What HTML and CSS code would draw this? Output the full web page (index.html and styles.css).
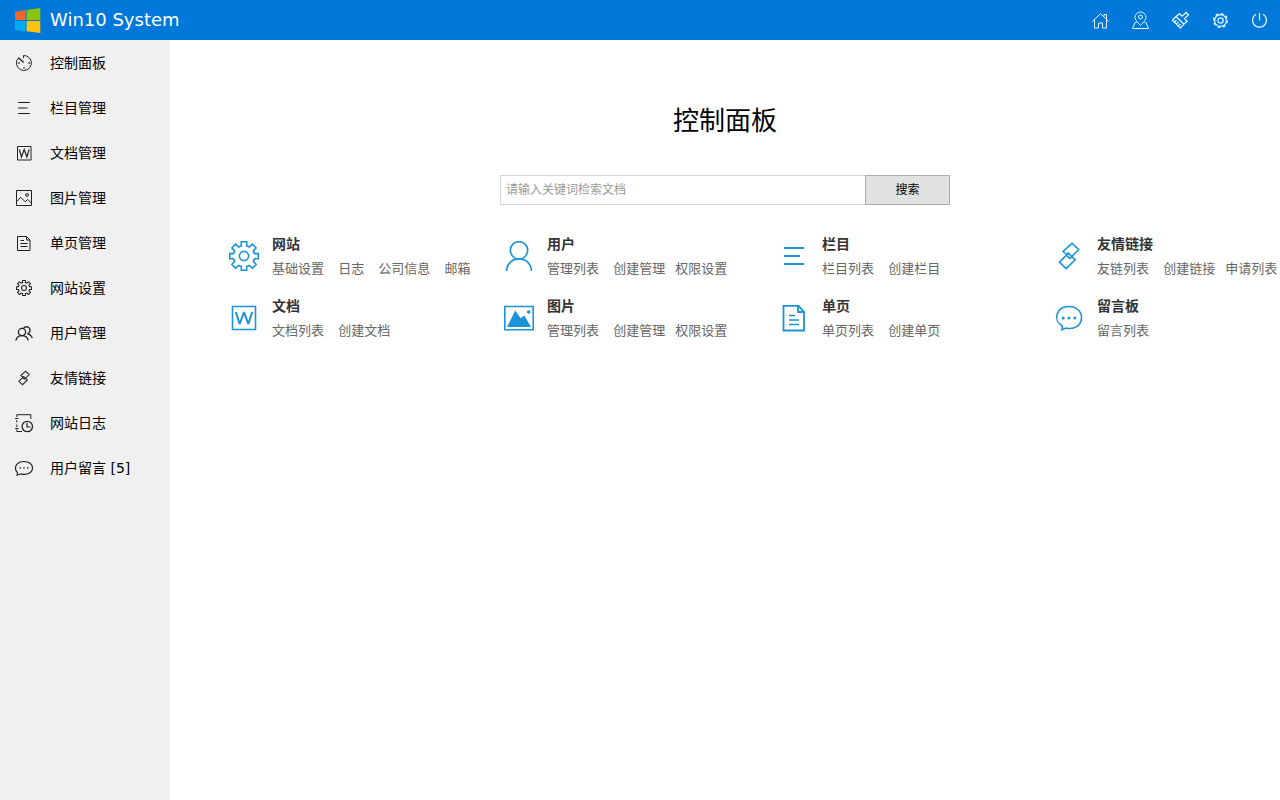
FILE: index.html
```html
<!DOCTYPE html>
<html lang="zh-CN">
<head>
<meta charset="utf-8">
<meta name="viewport" content="width=device-width, initial-scale=1">
<title>Win10 System</title>
<link rel="stylesheet" href="styles.css">
</head>
<body>
<svg class="defs" aria-hidden="true">
  <symbol id="gear" viewBox="0 0 30 30">
    <path d="M12.3 0.8h5.4v4.1l2.7 1.1 3-2.8 3.7 3.7-2.8 3 1.1 2.7h3.8v5.2h-3.8l-1.1 2.7 2.8 3-3.7 3.7-3-2.8-2.7 1.1v3.8h-5.4v-3.8l-2.7-1.1-3 2.8-3.7-3.7 2.8-3-1.1-2.7h-3.8v-5.2h3.8l1.1-2.7-2.8-3 3.7-3.7 3 2.8 2.7-1.1z"/>
    <circle cx="15" cy="15" r="4.6"/>
  </symbol>
  <symbol id="link" viewBox="0 0 30 30">
    <path d="M12.500 13.500 9 10.500 18 2.300l6.700 6.200-8.900 9-3-2.900M17.500 15l3.700 3.700-9 8.900-6.700-6.400 8.800-9.200 3.200 3.200"/>
  </symbol>
</svg>
<header class="topbar">
  <svg class="logo" viewBox="0 0 26 26" aria-hidden="true">
    <path fill="#f3652f" d="M0 3.7 10.6 2v10H0z"/>
    <path fill="#8cc404" d="M11.6 1.9 25.3 0v12H11.6z"/>
    <path fill="#00adf0" d="M0 13h10.6v10.5L0 22z"/>
    <path fill="#ffc30c" d="M11.6 13h13.7v12l-13.7-1.8z"/>
  </svg>
  <span class="brand">Win10 System</span>
  <nav class="tools">
    <button class="tool" aria-label="首页"><svg class="icon" viewBox="0 0 20 20"><path d="M2.300 11.500 10.500 3.700 18.700 11.500M4.500 9.500v8.500h4v-5h4v5h4V9.500M14 6.500V4.500h2.500V9"/></svg></button>
    <button class="tool" aria-label="地图"><svg class="icon" viewBox="0 0 20 20"><path d="M10.500 15.500C7.500 12 5 10 5 7.500a5.500 5.500 0 0 1 11 0c0 2.500-2.500 4.500-5.500 8zM6.500 12.500H5L2.500 18.500h16L16 12.500h-1.500"/><circle cx="10.500" cy="7" r="2"/></svg></button>
    <button class="tool" aria-label="主题"><svg class="icon" viewBox="0 0 20 20"><path stroke-width="1.300" d="M6 6.500 9.500 3.700l2.600 2.500 4-3.700L18.500 5l-4 3.600 2.600 2.600-3.200 2.900zM6 6.500l-3.500 3.800 7.900 7.800 3.500-4M4.500 12l2-1.800M6.500 14l2-2M8.500 16l2-2"/></svg></button>
    <button class="tool" aria-label="设置"><svg class="icon" viewBox="0 0 20 20"><circle cx="10.500" cy="10.500" r="5.900" stroke-width="1.200"/><circle cx="10.500" cy="10.500" r="2.700" stroke-width="1.200"/><circle cx="10.500" cy="10.500" r="6.900" stroke-width="1.400" stroke-dasharray="2.900 2.520"/></svg></button>
    <button class="tool" aria-label="退出"><svg class="icon" viewBox="0 0 20 20"><path stroke-width="1.300" d="M9.500 3v7.300M6 4.200a7 7 0 1 0 7 0"/></svg></button>
  </nav>
</header>
<div class="layout">
  <nav class="sidebar">
    <a class="item" href="#"><svg class="icon" viewBox="0 0 20 20"><path d="M9.500 5V2.500a7.500 7.500 0 1 1-5 2.300"/><path stroke-width="1.300" d="M4.500 4.800 9.700 9.500M5.800 10H4.300M14.500 10H16M10 15.700v-1.500"/></svg>控制面板</a>
    <a class="item" href="#"><svg class="icon" viewBox="0 0 20 20"><path stroke-width="1.200" d="M4 4.500h12M4 10h9.500M4 15.500h12"/></svg>栏目管理</a>
    <a class="item" href="#"><svg class="icon" viewBox="0 0 20 20"><path d="M3.500 3.500h13.500v13.500h-13.500z"/><path stroke-width="1.200" d="m5.300 6.500 2.200 7.500 2.700-7.500 2.700 7.500 2.200-7.500"/></svg>文档管理</a>
    <a class="item" href="#"><svg class="icon" viewBox="0 0 20 20"><path d="M2.500 2.500h15v15h-15zM3 13.500l3.700-4.300 4.500 4.600 2.500-2.400 3.500 3.600"/><circle cx="13" cy="7" r="1.400"/></svg>图片管理</a>
    <a class="item" href="#"><svg class="icon" viewBox="0 0 20 20"><path d="M3.500 3.500h9l3.500 3.500v10.500H3.500zM12.500 3.500V7H16M6.500 7.500H10M6.500 10.500h7M6.500 13.500h7"/></svg>单页管理</a>
    <a class="item" href="#"><svg class="icon gear"><use href="#gear"/></svg>网站设置</a>
    <a class="item" href="#"><svg class="icon" viewBox="0 0 20 20"><g stroke-width="1.300"><circle cx="8" cy="9" r="3.600"/><path d="M1.800 17.500c.8-3.200 3.200-4.800 6.200-4.800s5.400 1.600 6.200 4.800M9.500 5.300a3.600 3.600 0 1 1 4 5.500c2.500.4 4.100 2 4.700 4.300"/></g></svg>用户管理</a>
    <a class="item" href="#"><svg class="icon gear"><use href="#link"/></svg>友情链接</a>
    <a class="item" href="#"><svg class="icon" viewBox="0 0 20 20"><path d="M2.800 4V1.700h14V6M2.800 7v2.500M2.800 11.500v2.500M2.800 16.500v2H8M1 5.500h3.500M1 15.500h3.500"/><circle stroke-width="1.300" cx="13.300" cy="13.500" r="5.200"/><path stroke-width="1.200" d="M13 10v4h3.500"/></svg>网站日志</a>
    <a class="item" href="#"><svg class="icon" viewBox="0 0 20 20"><path stroke-width="1.200" d="M3.200 17c.3-1 .3-1.700.1-2.600C-.8 10 2.500 3.500 10 3.500c5 0 8.500 2.700 8.500 6.300 0 5-5.500 7.700-11.400 6z"/><path stroke-width="1.300" d="M5.500 9.800H7M9.200 9.800h1.500M13 9.800h1.500"/></svg>用户留言 [5]</a>
  </nav>
  <main class="main">
    <h1 class="title">控制面板</h1>
    <form class="search">
      <input class="search-input" type="text" aria-label="关键词" placeholder="请输入关键词检索文档">
      <button class="search-button" type="button">搜索</button>
    </form>
    <div class="grid">
      <section class="card"><svg class="card-icon"><use href="#gear"/></svg><div><h2>网站</h2><p><a href="#">基础设置</a> <a href="#">日志</a> <a href="#">公司信息</a> <a href="#">邮箱</a></p></div></section>
      <section class="card"><svg class="card-icon" viewBox="0 0 30 30"><circle cx="15" cy="9.300" r="8.700"/><path d="M2.500 30C3 22.500 8 17.900 15 17.900S27 22.500 27.500 30"/></svg><div><h2>用户</h2><p><a href="#">管理列表</a> <a href="#">创建管理</a><a href="#">权限设置</a></p></div></section>
      <section class="card"><svg class="card-icon" viewBox="0 0 30 30"><path stroke-width="2" d="M5 7h20M5 15h16M5 23h20"/></svg><div><h2>栏目</h2><p><a href="#">栏目列表</a> <a href="#">创建栏目</a></p></div></section>
      <section class="card"><svg class="card-icon"><use href="#link"/></svg><div><h2>友情链接</h2><p><a href="#">友链列表</a> <a href="#">创建链接</a><a href="#">申请列表</a></p></div></section>
      <section class="card"><svg class="card-icon" viewBox="0 0 30 30"><path d="M3.500 3.500h23v23h-23z"/><path stroke-width="2" stroke-linejoin="bevel" d="m6.800 9 3.900 12 4.300-12 4.300 12 3.900-12"/></svg><div><h2>文档</h2><p><a href="#">文档列表</a> <a href="#">创建文档</a></p></div></section>
      <section class="card"><svg class="card-icon" viewBox="0 0 30 30"><path d="M.800 3.500h28.400v23.200H.800z"/><path class="solid" d="m3 24 8.300-16.500 5.300 7.800 3.600-2.800L27 24z"/><circle class="solid" cx="24.700" cy="9" r="1.800"/></svg><div><h2>图片</h2><p><a href="#">管理列表</a> <a href="#">创建管理</a><a href="#">权限设置</a></p></div></section>
      <section class="card"><svg class="card-icon" viewBox="0 0 30 30"><path stroke-width="1.800" d="M4.500 2.800h15l5.500 6v18.700H4.500zM19 3v6h6"/><path d="M10 12.500h6M10 17h10M10 21.500h10"/></svg><div><h2>单页</h2><p><a href="#">单页列表</a> <a href="#">创建单页</a></p></div></section>
      <section class="card"><svg class="card-icon" viewBox="0 0 30 30"><path d="M8 26.800c.5-1.500.4-2.700.2-4C-1.500 17.500 2 3.500 15 3.500c7.500 0 12.500 5 12.500 11 0 8.500-8 12.500-15.500 10.500z"/><g class="solid"><circle cx="9.200" cy="15" r="1.500"/><circle cx="15" cy="15" r="1.500"/><circle cx="20.800" cy="15" r="1.500"/></g></svg><div><h2>留言板</h2><p><a href="#">留言列表</a></p></div></section>
    </div>
  </main>
</div>
</body>
</html>
```
FILE: styles.css
```css
* { box-sizing: border-box; }

body {
  margin: 0;
  min-height: 100vh;
  display: flex;
  flex-direction: column;
  font-family: "DejaVu Sans", "Noto Sans CJK SC", sans-serif;
  font-size: 14px;
  color: #000;
  background: #fff;
}

a { color: inherit; text-decoration: none; }
button, input { font-family: inherit; margin: 0; }
svg { flex: none; fill: none; stroke: currentColor; }

.defs { display: none; }

.topbar {
  display: flex;
  align-items: center;
  height: 40px;
  padding-left: 15px;
  background: #0078d9;
  color: #fff;
}

.logo { width: 26px; height: 26px; margin-top: 1px; stroke: none; }
.brand { margin-left: 9px; font-size: 18px; line-height: 40px; }
.tools { display: flex; margin-left: auto; }

.tool {
  display: flex;
  align-items: center;
  justify-content: center;
  width: 40px;
  height: 40px;
  padding: 0;
  border: 0;
  background: none;
  color: #e5f6ff;
}

.icon { width: 20px; height: 20px; }
.layout { display: flex; flex: 1; }

.sidebar {
  flex: none;
  width: 170px;
  background: #f0f0f0;
}

.item {
  display: flex;
  align-items: center;
  gap: 16px;
  height: 45px;
  padding-left: 14px;
  line-height: 44px;
}

.item .icon { color: #222; }
.item .gear { padding: 2px; stroke-width: 2; }

.main {
  flex: 1;
  min-width: 0;
  padding-top: 60px;
  overflow: hidden;
}

.title {
  margin: 0;
  font-size: 26px;
  font-weight: 400;
  line-height: 42px;
  text-align: center;
}

.search {
  display: flex;
  max-width: 450px;
  margin: 33px auto 0;
}

.search-input {
  flex: 1;
  min-width: 0;
  height: 30px;
  padding: 0 5px;
  border: 1px solid #d5d5d5;
  border-right: 0;
  font-size: 12px;
}

.search-input::placeholder { color: #999; }

.search-button {
  width: 85px;
  height: 30px;
  padding: 0 0 4px;
  border: 1px solid #adadad;
  background: #e1e1e1;
  font-size: 12px;
  color: #000;
}

.grid {
  display: grid;
  grid-template-columns: repeat(4, minmax(275px, 1fr));
  row-gap: 12px;
  margin-top: 27px;
  padding-left: 59px;
}

.card { display: flex; gap: 13px; white-space: nowrap; }

.card-icon {
  width: 30px;
  height: 30px;
  margin-top: 9px;
  color: #1c93d6;
  stroke-width: 1.600;
}

.solid { fill: currentColor; stroke: none; }

.card h2 {
  margin: 0;
  font-size: 14px;
  line-height: 24px;
  color: #333;
}

.card p {
  margin: 0;
  font-size: 13px;
  line-height: 26px;
  color: #666;
}

.card a { margin-right: 10px; }
```
